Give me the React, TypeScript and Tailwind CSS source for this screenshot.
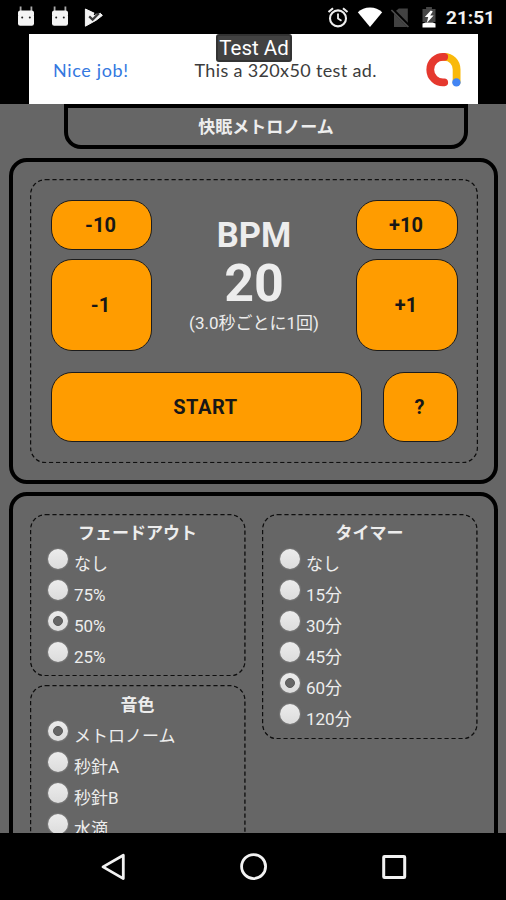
import { useState } from 'react';
import type { ReactNode } from 'react';
import { clsx } from 'clsx';

const fadeOptions = ['なし', '75%', '50%', '25%'];
const timerOptions = ['なし', '15分', '30分', '45分', '60分', '120分'];
const soundOptions = ['メトロノーム', '秒針A', '秒針B', '水滴'];

function DroidIcon() {
  return (
    <svg width="18" height="22" viewBox="0 0 18 22" fill="#f4f4f4">
      <path d="M3.6 .5V6M14.4 .5V6" stroke="#aaa" strokeWidth="1.8" />
      <path d="M3.6 4.6h10.8A2.6 2.6 0 0 1 17 7.4V9H1V7.4a2.6 2.6 0 0 1 2.6-2.8Z" />
      <rect x="1" y="7.4" width="16" height="12.4" rx="2.2" />
      <circle cx="5.2" cy="11.4" r="1" fill="#222" />
      <circle cx="12.8" cy="11.4" r="1" fill="#222" />
    </svg>
  );
}

function StatusBar() {
  return (
    <div className="flex h-[34px] items-center justify-between bg-black pl-[17px] pr-[11px]">
      <div className="flex items-center">
        <DroidIcon />
        <span className="ml-[15.5px]">
          <DroidIcon />
        </span>
        <svg className="ml-[15px]" width="20" height="22" viewBox="0 0 20 22">
          <path d="M1.4 3v17.2l10.8-6L18.4 9.4l-2.2-2.2-3 1.4z" fill="#f4f4f4" stroke="#f4f4f4" strokeLinejoin="round" />
          <path d="m5.2 10.4 3.4 3.2L15 7.2" fill="none" stroke="#3d3d3d" strokeWidth="2.2" />
          <path d="M12.2 5 10.4 9" stroke="#000" strokeWidth="1.6" />
        </svg>
      </div>
      <div className="flex items-center">
        <svg width="22" height="22" viewBox="0 0 22 22" fill="none" stroke="#eee" strokeWidth="2.1">
          <circle cx="11" cy="12.4" r="8" />
          <path d="M11 7.5v5l3.5 2.2" strokeWidth="1.8" />
          <path d="M1.5 6 6 2.2M20.5 6 16 2.2" />
        </svg>
        <svg className="ml-[8px]" width="26" height="22" viewBox="0 0 26 22">
          <path d="M.8 6.2C4 3.3 8.2 1.6 13 1.6s9 1.7 12.2 4.6L13 21z" fill="#fff" />
        </svg>
        <svg className="ml-[7px]" width="22" height="22" viewBox="0 0 22 22">
          <path d="M4 6.5 8.8 2.6h9V21H4z" fill="#424242" />
          <path d="M1.8 3 20 21.2" stroke="#000" strokeWidth="3.4" />
          <path d="M1.4 4 18.4 21" stroke="#4c4c4c" strokeWidth="1.7" />
        </svg>
        <svg className="ml-[9px]" width="16" height="22" viewBox="0 0 16 22">
          <path d="M1.5 3h3.6V1h5.8v2h3.6v13h-13z" fill="#464646" />
          <path d="M1.5 17.6 4.6 16.6h7l2.9 1V21.6h-13z" fill="#fff" />
          <path d="M9.8 4.4 3.8 11h3.4l-1.4 6L12.6 9.6H9.2l2.6-4.2z" fill="#fff" />
        </svg>
        <span className="ml-[9px] pt-px text-[19px] font-bold leading-none text-[#f0f0f0]">21:51</span>
      </div>
    </div>
  );
}

function AdBanner() {
  return (
    <div className="flex h-[70px] bg-black pl-[29px]">
      <div className="relative flex w-[449px] items-center bg-white pl-[24px] pr-[16px] pt-[2px] font-['Lato','Roboto',sans-serif]">
        <span className="w-[141.5px] whitespace-nowrap text-[18px] tracking-[0.65px] text-[#3478df]">Nice job!</span>
        <span className="whitespace-nowrap text-[18px] tracking-[0.35px] text-[#3c3c3c]">This a 320x50 test ad.</span>
        <svg className="mb-px ml-auto" width="36" height="36" viewBox="0 0 36 36" fill="none" strokeWidth="7.8" strokeLinecap="round">
          <path d="M18.2 4.9c7 0 12.4 5.3 12.4 12.6V30" stroke="#f9b90a" />
          <path d="M18.2 4.9A12.8 12.8 0 1 0 18.2 30.4" stroke="#e5382e" />
          <circle cx="30.4" cy="30.4" r="4.2" fill="#4285f4" stroke="none" />
        </svg>
        <span className="absolute left-[187px] top-0 flex h-[28px] w-[76px] items-center justify-center rounded-[3px] border-2 border-[#333] bg-[#424242] pt-px font-['Roboto',sans-serif] text-[20.5px] leading-none whitespace-nowrap text-white">
          Test Ad
        </span>
      </div>
    </div>
  );
}

// 1px dashes scaled up, so that they keep the proportions of a dense display
function DashedBorder() {
  return (
    <span className="pointer-events-none absolute left-0 top-0 h-[71.43%] w-[71.43%] origin-top-left scale-[1.4] rounded-[11px] border border-dashed border-black/85" />
  );
}

function Panel({ className, children }: { className?: string; children: ReactNode }) {
  return (
    <div className={clsx('relative', className)}>
      <DashedBorder />
      {children}
    </div>
  );
}

function OrangeButton({ className, onClick, children }: { className: string; onClick?: () => void; children: ReactNode }) {
  return (
    <button
      onClick={onClick}
      className={clsx(
        'flex items-center justify-center border-[1.4px] border-[#1c1c1c] bg-[#ff9c00] pr-[2px] text-[20px] font-bold leading-none text-[#171717]',
        className
      )}
    >
      {children}
    </button>
  );
}

function RadioGroup({ title, options, initial }: { title: string; options: string[]; initial: string }) {
  const [value, setValue] = useState(initial);
  return (
    <div className="pt-[4px]">
      <h2 className="h-[25px] text-center text-[17px] font-bold leading-[30px]">{title}</h2>
      {options.map((option) => (
        <label key={option} className="flex h-[31px] items-center pl-[18px]" onClick={() => setValue(option)}>
          <span className="flex size-[20px] items-center justify-center rounded-full bg-linear-to-b from-[#ececec] to-[#dcdcdc] shadow-[0_0_1px_1px_rgba(150,150,150,0.35)]">
            {value === option && <span className="size-[10px] rounded-full border border-[#5a5a5a] bg-[#666]" />}
          </span>
          <span className="relative top-[5.5px] ml-[6px] text-[17px] leading-none">{option}</span>
        </label>
      ))}
    </div>
  );
}

function NavBar() {
  return (
    <div className="flex h-[67px] items-center justify-between bg-black pl-[99px] pr-[98px]">
      <svg width="28" height="30" viewBox="0 0 28 30" fill="none" stroke="#f2f2f2" strokeWidth="2.8" strokeLinejoin="round">
        <path d="M24.3 3.2v23.4L4 14.9z" />
      </svg>
      <svg width="28" height="30" viewBox="0 0 28 30" fill="none" stroke="#f2f2f2" strokeWidth="2.8">
        <circle cx="13.6" cy="14.6" r="12" />
      </svg>
      <svg width="28" height="30" viewBox="0 0 28 30" fill="none" stroke="#f2f2f2" strokeWidth="3">
        <rect x="3.7" y="4.5" width="21" height="21" rx="0.8" />
      </svg>
    </div>
  );
}

export default function App() {
  const [bpm, setBpm] = useState(20);
  const [running, setRunning] = useState(false);
  const change = (diff: number) => setBpm((v) => Math.max(1, v + diff));

  return (
    <div className="flex h-[900px] w-[506px] flex-col overflow-hidden bg-black font-['Roboto','Noto_Sans_CJK_JP',sans-serif] text-[#ededed]">
      <StatusBar />
      <AdBanner />
      <main className="h-[729px] overflow-hidden bg-[#666]">
        <h1 className="ml-[64px] h-[45px] w-[404px] rounded-b-[17px] border-4 border-black pt-[6px] text-center text-[17px] font-bold leading-[26px]">
          快眠メトロノーム
        </h1>

        <section className="ml-[9px] mt-[9px] h-[326px] w-[489px] rounded-[18px] border-4 border-black pl-[17px] pt-[17px]">
          <Panel className="h-[284px] w-[448px] pl-[21px] pr-[20px] pt-[21px]">
            <div className="flex">
              <div className="flex flex-col gap-[9px]">
                <OrangeButton className="h-[50px] w-[101px] rounded-[21px] pb-px" onClick={() => change(-10)}>-10</OrangeButton>
                <OrangeButton className="h-[92px] w-[101px] rounded-[21px]" onClick={() => change(-1)}>-1</OrangeButton>
              </div>
              <div className="flex-1 pt-[15px] text-center">
                <div className="text-[34.5px] font-bold leading-[41px]">BPM</div>
                <div className="text-[52px] font-bold leading-[56px]">{bpm}</div>
                <div className="text-[17px] leading-[23px]">({(60 / bpm).toFixed(1)}秒ごとに1回)</div>
              </div>
              <div className="flex flex-col gap-[9px]">
                <OrangeButton className="h-[50px] w-[102px] rounded-[21px] pb-px" onClick={() => change(10)}>+10</OrangeButton>
                <OrangeButton className="h-[92px] w-[102px] rounded-[21px]" onClick={() => change(1)}>+1</OrangeButton>
              </div>
            </div>
            <div className="mt-[21px] flex justify-between">
              <OrangeButton className="h-[70px] w-[311px] rounded-[21px] tracking-[0.6px]" onClick={() => setRunning(!running)}>
                {running ? 'STOP' : 'START'}
              </OrangeButton>
              <OrangeButton className="h-[70px] w-[75px] rounded-[21px]">?</OrangeButton>
            </div>
          </Panel>
        </section>

        <section className="ml-[9px] mt-[8px] flex h-[500px] w-[489px] items-start gap-[17px] rounded-[18px] border-4 border-black pl-[17px] pt-[18px]">
          <div className="flex flex-col gap-[8px]">
            <Panel className="h-[163px] w-[215px]">
              <RadioGroup title="フェードアウト" options={fadeOptions} initial="50%" />
            </Panel>
            <Panel className="h-[260px] w-[215px] pt-px">
              <RadioGroup title="音色" options={soundOptions} initial="メトロノーム" />
            </Panel>
          </div>
          <Panel className="h-[225px] w-[215px]">
            <RadioGroup title="タイマー" options={timerOptions} initial="60分" />
          </Panel>
        </section>
      </main>
      <NavBar />
    </div>
  );
}
